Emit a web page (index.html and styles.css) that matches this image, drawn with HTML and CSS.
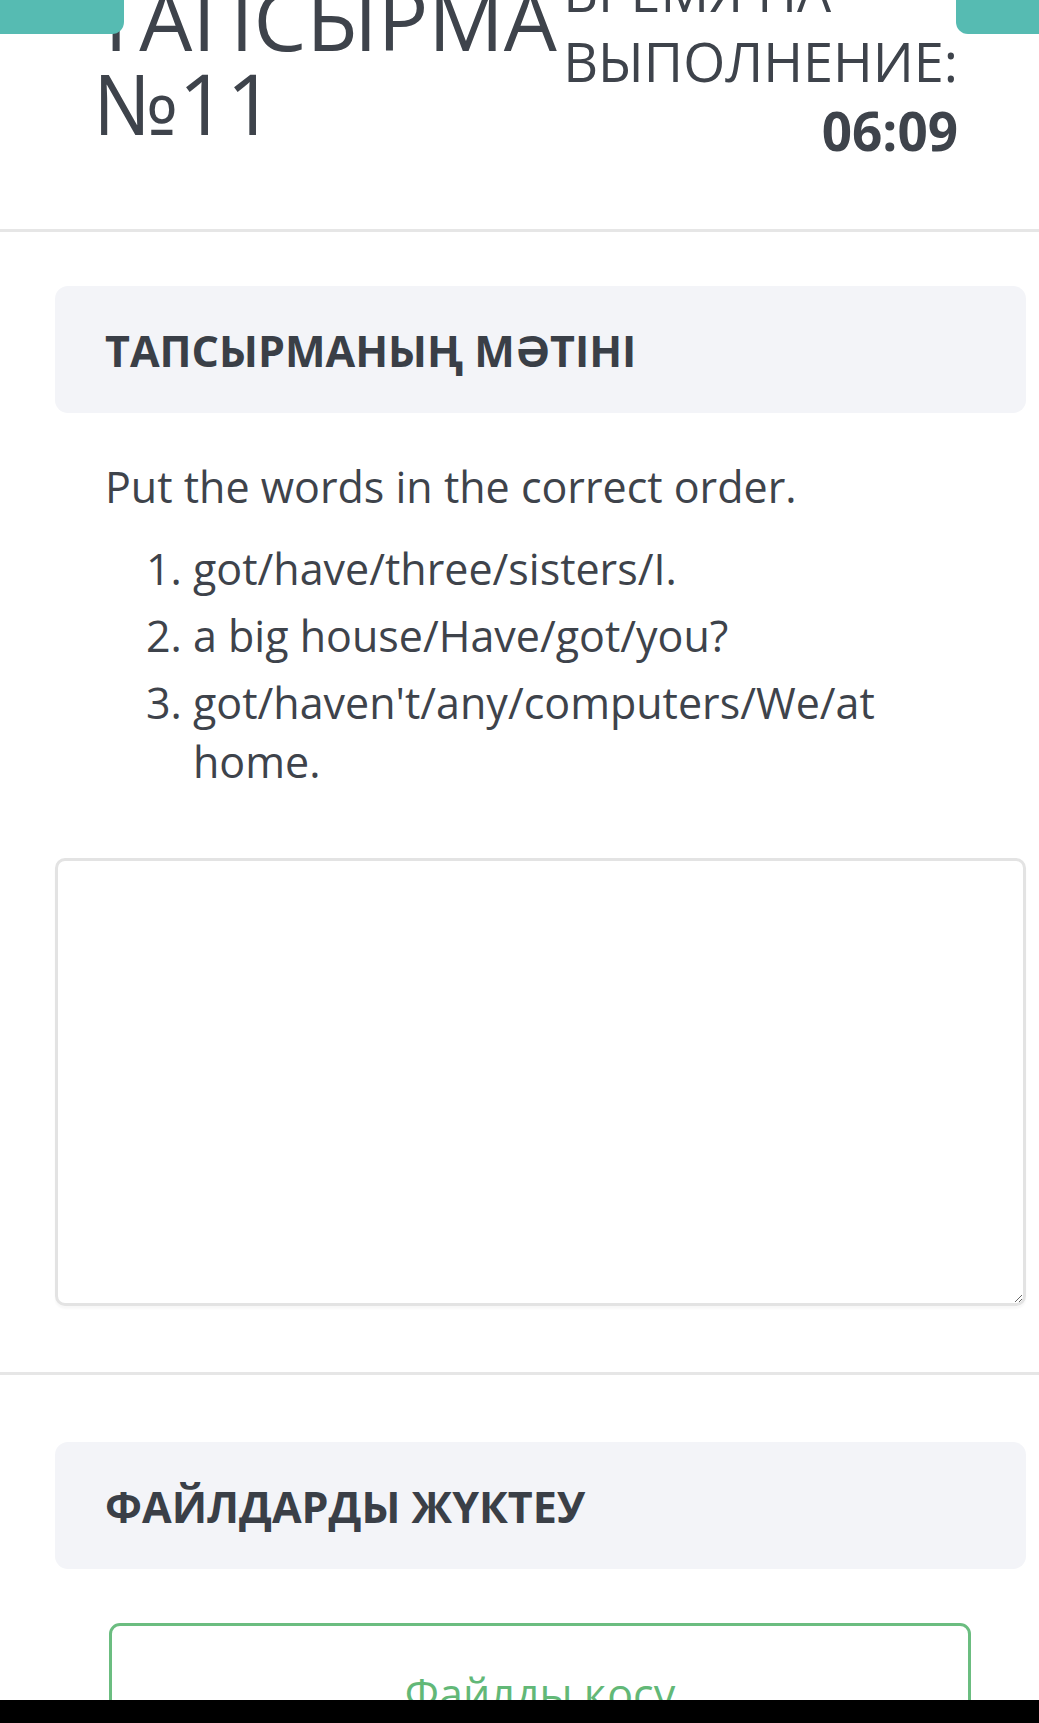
FILE: index.html
```html
<!DOCTYPE html>
<html lang="kk">
<head>
<meta charset="utf-8">
<title>Тапсырма №11</title>
<link rel="stylesheet" href="styles.css">
</head>
<body>
<div class="page">
  <header class="task-header">
    <h1 class="task-title">ТАПСЫРМА №11</h1>
    <div class="timer">
      <span class="timer-label">ВРЕМЯ НА<br>ВЫПОЛНЕНИЕ:</span>
      <span class="timer-value">06:09</span>
    </div>
  </header>

  <section class="section section-task">
    <div class="section-head">
      <h2 class="section-title">ТАПСЫРМАНЫҢ МӘТІНІ</h2>
    </div>
    <div class="task-text">
      <p class="task-lead">Put the words in the correct order.</p>
      <ol class="task-list">
        <li>got/have/three/sisters/I.</li>
        <li>a big house/Have/got/you?</li>
        <li>got/haven't/any/computers/We/at home.</li>
      </ol>
    </div>
    <textarea class="answer"></textarea>
  </section>

  <section class="section section-files">
    <div class="section-head">
      <h2 class="section-title">ФАЙЛДАРДЫ ЖҮКТЕУ</h2>
    </div>
    <div class="attach-btn" role="button">Файлды қосу</div>
  </section>
</div>

<div class="tab tab-left"></div>
<div class="tab tab-right"></div>
<div class="nav-bar"></div>
</body>
</html>
```

FILE: styles.css
```css
html, body {
  margin: 0;
  padding: 0;
  background: #ffffff;
}

body {
  height: 1723px;
  overflow: hidden;
  position: relative;
  font-family: "Open Sans", "Noto Sans", "Liberation Sans", sans-serif;
  color: #3e434b;
}

.page {
  display: flex;
  flex-direction: column;
}

/* Header */
.task-header {
  display: flex;
  align-items: center;
  justify-content: space-between;
  margin-top: -44px;
  padding: 0 81px 63px 93px;
  border-bottom: 3px solid #e6e6e6;
}

.task-title {
  flex: 1;
  min-width: 0;
  margin: 0;
  font-size: 84px;
  line-height: 84px;
  font-weight: 400;
  color: #3e434b;
}

.timer {
  flex: none;
  display: flex;
  flex-direction: column;
  font-size: 54px;
  line-height: 70px;
}

.timer-label {
  display: block;
  text-align: left;
  font-weight: 400;
}

.timer-value {
  display: block;
  text-align: right;
  font-weight: 700;
  font-size: 53px;
}

/* Sections */
.section {
  display: flex;
  flex-direction: column;
  padding-left: 55px;
  padding-right: 13px;
}

.section-task {
  padding-top: 54px;
  padding-bottom: 66px;
  border-bottom: 3px solid #e6e6e6;
}

.section-files {
  padding-top: 67px;
}

.section-head {
  background: #f3f4f8;
  border-radius: 13px;
  padding: 35px 52px 33px 50px;
}

.section-title {
  margin: 0;
  font-size: 43px;
  line-height: 59px;
  font-weight: 700;
  color: #3a3f47;
}

.task-text {
  padding: 44px 52px 0 50px;
  font-size: 43px;
  line-height: 59px;
}

.task-lead {
  margin: 0;
}

.task-list {
  margin: 23px 0 0;
  padding-left: 88px;
}

.task-list li {
  margin-bottom: 8px;
}

.task-list li:last-child {
  margin-bottom: 0;
}

.answer {
  display: block;
  box-sizing: border-box;
  width: 100%;
  height: 448px;
  margin-top: 67px;
  border: 3px solid #e3e3e3;
  border-radius: 10px;
  background: #ffffff;
  box-shadow: 0 3px 2px rgba(0, 0, 0, 0.03);
  font-family: inherit;
  font-size: 42px;
}

.attach-btn {
  align-self: flex-start;
  box-sizing: border-box;
  width: 862px;
  margin: 54px 0 0 54px;
  padding: 38px 20px 80px;
  border: 3px solid #6bbd80;
  border-radius: 11px;
  background: #ffffff;
  color: #62b877;
  font-size: 43px;
  line-height: 59px;
  text-align: center;
}

/* Overlays */
.tab {
  position: absolute;
  top: 0;
  height: 34px;
  background: #56bbb2;
}

.tab-left {
  left: 0;
  width: 124px;
  border-bottom-right-radius: 12px;
}

.tab-right {
  right: 0;
  width: 83px;
  border-bottom-left-radius: 12px;
}

.nav-bar {
  position: absolute;
  left: 0;
  right: 0;
  bottom: 0;
  height: 23px;
  background: #000000;
}
```
